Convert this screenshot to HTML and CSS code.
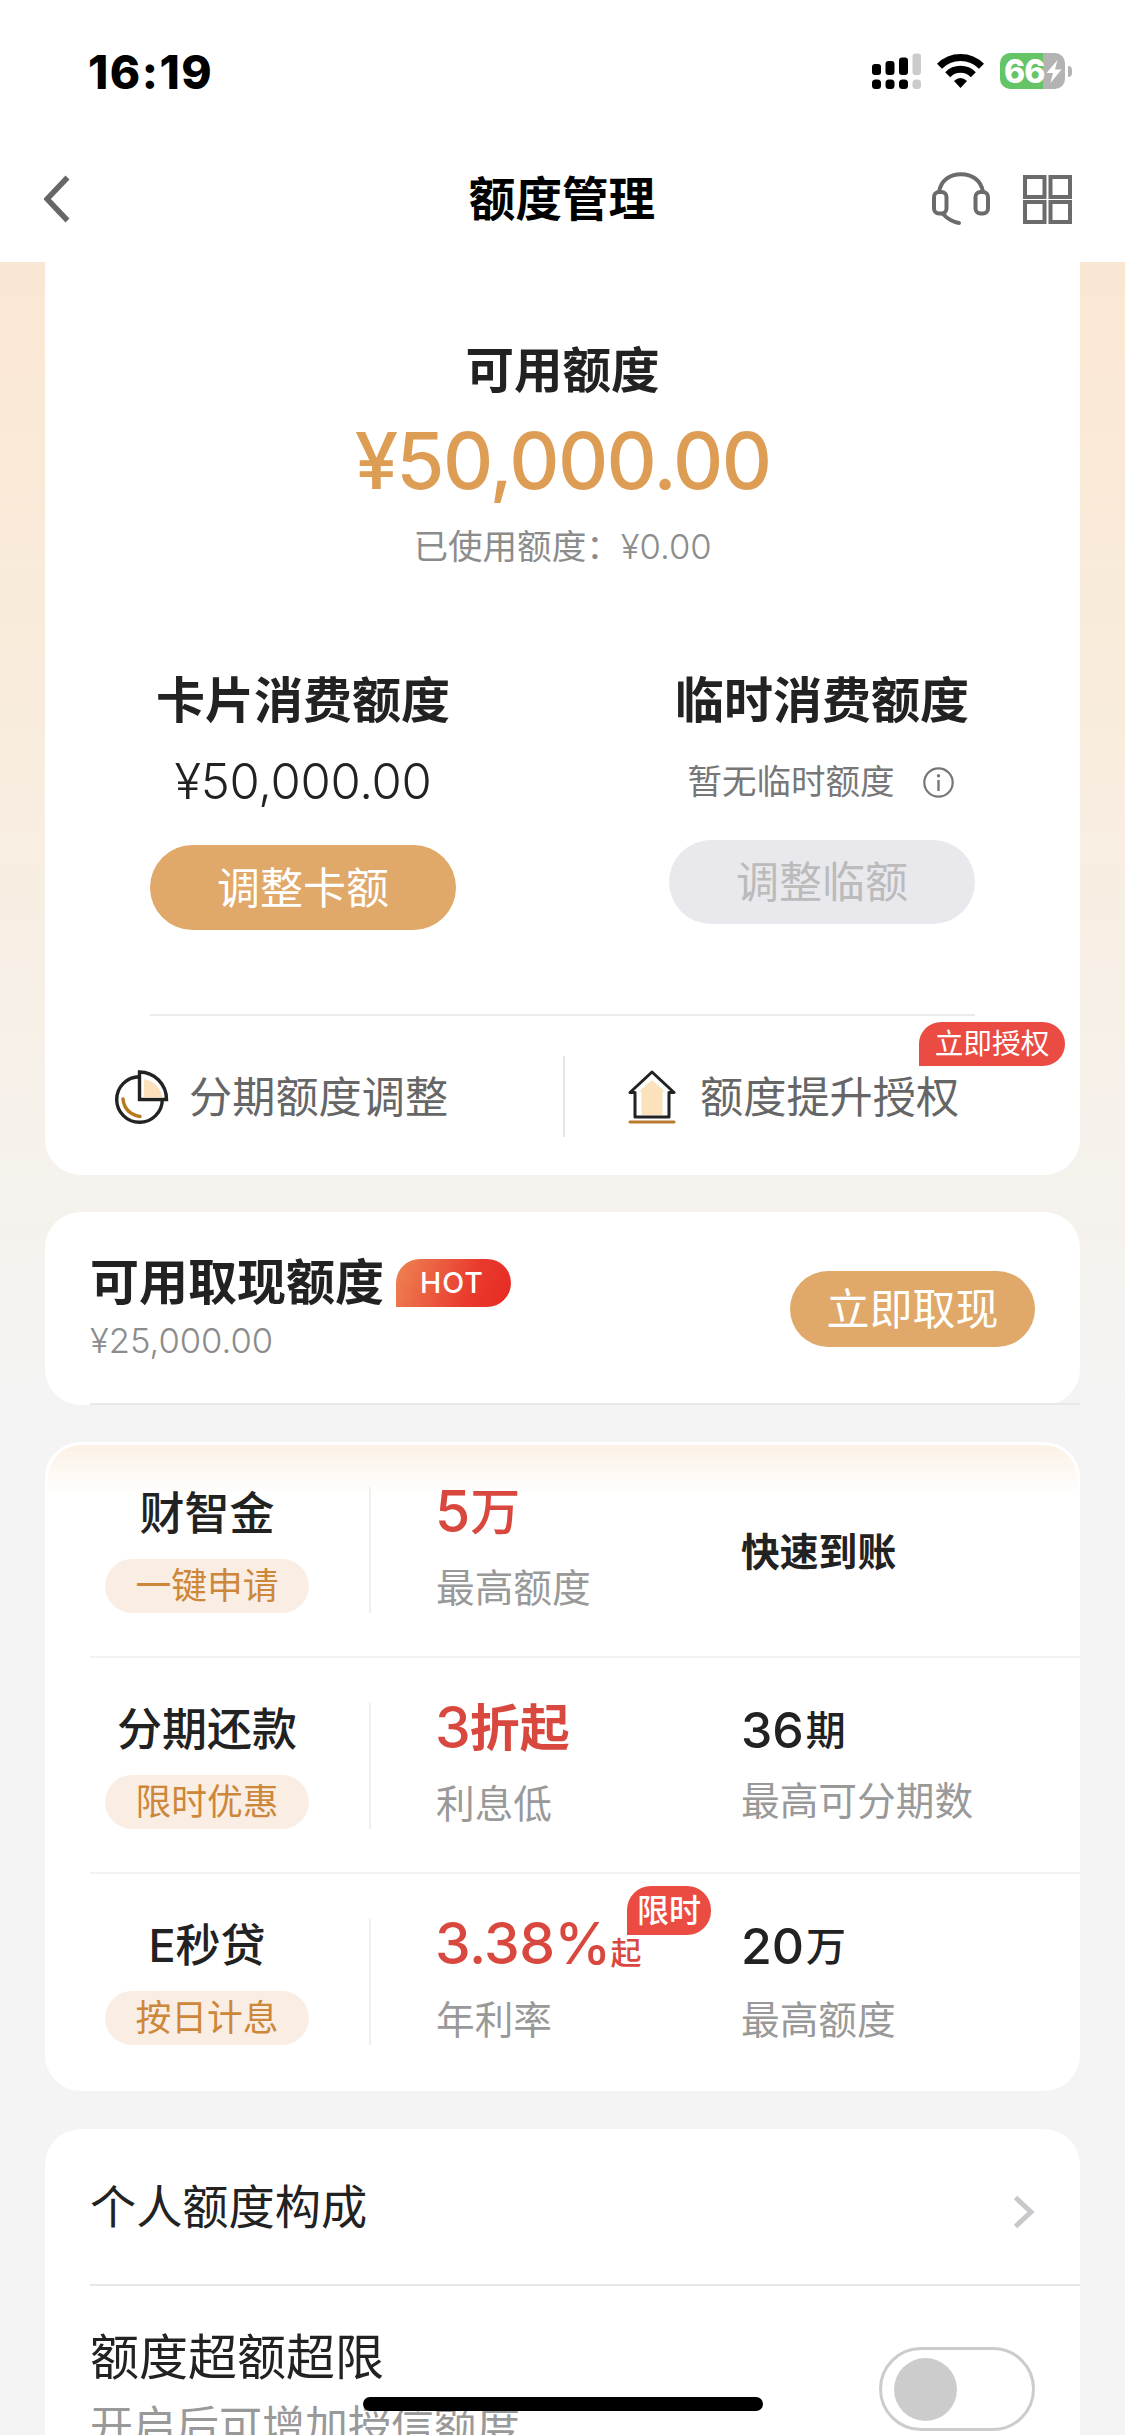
FILE: index.html
```html
<!DOCTYPE html>
<html lang="zh-CN">
<head>
<meta charset="utf-8">
<meta name="viewport" content="width=device-width, initial-scale=1">
<title>额度管理</title>
<link rel="stylesheet" href="styles.css">
</head>
<body>
<header class="header">
  <div class="status-bar">
    <span class="clock">16:19</span>
    <div class="status-icons">
      <svg class="signal" width="49" height="36" viewBox="0 0 49 36">
        <g fill="#000">
          <rect x="0" y="11" width="9" height="11" rx="3"/><rect x="13.5" y="8" width="9" height="14" rx="3"/><rect x="27" y="4.500" width="9" height="17.500" rx="3"/>
          <rect x="0" y="26.500" width="9" height="9.500" rx="3.500"/><rect x="13.500" y="26.500" width="9" height="9.500" rx="3.500"/><rect x="27" y="26.500" width="9" height="9.500" rx="3.500"/>
        </g>
        <g fill="#cbcbcb"><rect x="40.500" y="0.500" width="8.500" height="21.500" rx="3"/><rect x="40.500" y="26.500" width="8.500" height="9.500" rx="3.500"/></g>
      </svg>
      <svg class="wifi" width="47" height="36" viewBox="0 0 47 36">
        <g fill="none" stroke="#000" stroke-width="7">
          <path d="M2.500 13.200 A29.500 29.500 0 0 1 44.500 13.200"/>
          <path d="M10.700 21.700 A18 18 0 0 1 36.300 21.700"/>
        </g>
        <path d="M17 28 Q23.500 22 30 28 L23.500 35 Z" fill="#000"/>
      </svg>
      <div class="battery">
        <div class="battery-body">
          <span class="battery-level">66</span>
          <svg width="16" height="23" viewBox="0 0 16 23"><path d="M11.500 0 L0.500 13 H7 L4.500 23 L15.500 9.500 H9 Z" fill="#fff"/></svg>
        </div>
        <div class="battery-cap"></div>
      </div>
    </div>
  </div>
  <nav class="nav">
    <svg class="back" width="26" height="48" viewBox="0 0 26 48"><path d="M23.500 2.500 L3 24 L23.500 45.500" fill="none" stroke="#666" stroke-width="5.500"/></svg>
    <h1 class="nav-title">额度管理</h1>
    <div class="nav-actions">
      <svg width="58" height="54" viewBox="0 0 58 54" fill="none" stroke="#6b6b6b" stroke-width="4">
        <rect x="2" y="20" width="12.500" height="21.500" rx="5"/><rect x="43.500" y="20" width="12.500" height="21.500" rx="5"/>
        <path d="M7 20 C9 8 18 2.300 29 2.300 S49 8 51 20"/><path d="M11 42 Q18 49.500 27 51" stroke-linecap="round"/>
      </svg>
      <svg width="49" height="49" viewBox="0 0 49 49" fill="none" stroke="#6b6b6b" stroke-width="4">
        <rect x="2" y="2" width="19.500" height="20"/><rect x="27.500" y="2" width="19.500" height="20"/>
        <rect x="2" y="27" width="19.500" height="20"/><rect x="27.500" y="27" width="19.500" height="20"/>
      </svg>
    </div>
  </nav>
</header>

<main class="page">
  <section class="card quota">
    <h2 class="quota-title">可用额度</h2>
    <p class="quota-total">¥50,000.00</p>
    <p class="quota-used">已使用额度：<span class="quota-used-num">¥0.00</span></p>
    <div class="quota-split">
      <div class="quota-col">
        <h3 class="quota-name">卡片消费额度</h3>
        <p class="quota-value">¥50,000.00</p>
        <button class="btn btn-card">调整卡额</button>
      </div>
      <div class="quota-col">
        <h3 class="quota-name">临时消费额度</h3>
        <p class="quota-none">暂无临时额度
          <svg width="31" height="31" viewBox="0 0 31 31"><circle cx="15.500" cy="15.500" r="14.200" fill="none" stroke="#777" stroke-width="2.200"/><circle cx="15.500" cy="8.800" r="1.700" fill="#777"/><path d="M15.500 13 V24" stroke="#777" stroke-width="2.400"/></svg>
        </p>
        <button class="btn btn-disabled" disabled>调整临额</button>
      </div>
    </div>
    <div class="quota-links">
      <a class="link link-split">
        <svg width="54" height="54" viewBox="0 0 54 54" fill="none" stroke="#222" stroke-width="3.400">
          <circle cx="24.500" cy="29.500" r="22.800"/>
          <path d="M24.500 2 A27 27.500 0 0 1 51.500 29.500 H24.500 Z" fill="#fff"/>
          <path d="M29 9 Q44 12 47.500 27.500 H29 Z" fill="#fbe2bd" stroke="none"/>
          <path d="M8 29 Q9.500 43.500 25 46.500" stroke="#b87a20" stroke-linecap="round"/>
        </svg>
        <span>分期额度调整</span>
      </a>
      <i class="link-divider"></i>
      <a class="link link-auth">
        <svg width="48" height="54" viewBox="0 0 48 54" fill="none" stroke="#222" stroke-width="3">
          <path d="M24 2 L46 22.500 H41 V47 H7 V22.500 H2 Z" stroke-linejoin="round"/>
          <path d="M24 10 L37 21.500 H34.500 V45 H13.500 V21.500 H11 Z" fill="#fbe2bd" stroke="none"/>
          <path d="M2 52 H46" stroke="#b87a2c" stroke-linecap="round"/>
        </svg>
        <span>额度提升授权</span>
      </a>
      <span class="badge badge-auth">立即授权</span>
    </div>
  </section>

  <section class="card cash">
    <div class="cash-info">
      <h2 class="cash-title">可用取现额度<span class="badge-hot">HOT</span></h2>
      <p class="cash-value">¥25,000.00</p>
    </div>
    <button class="btn btn-cash">立即取现</button>
  </section>

  <section class="card products">
    <div class="product product-first">
      <div class="product-head"><h3>财智金</h3><span class="pill">一键申请</span></div>
      <div class="product-rate"><p class="rate">5<span class="rate-cn">万</span></p><p class="note">最高额度</p></div>
      <div class="product-more product-more-single"><p class="fact-text">快速到账</p></div>
    </div>
    <div class="product">
      <div class="product-head"><h3>分期还款</h3><span class="pill">限时优惠</span></div>
      <div class="product-rate"><p class="rate">3<span class="rate-cn rate-strong">折起</span></p><p class="note">利息低</p></div>
      <div class="product-more"><p class="fact">36<span class="fact-unit">期</span></p><p class="note note-up">最高可分期数</p></div>
    </div>
    <div class="product">
      <div class="product-head"><h3>E秒贷</h3><span class="pill">按日计息</span></div>
      <div class="product-rate"><p class="rate rate-long">3.38%<span class="rate-from">起</span></p><p class="note">年利率</p><span class="badge badge-limited">限时</span></div>
      <div class="product-more"><p class="fact">20<span class="fact-unit">万</span></p><p class="note">最高额度</p></div>
    </div>
  </section>

  <section class="card settings">
    <a class="setting">
      <span class="setting-name">个人额度构成</span>
      <svg width="22" height="34" viewBox="0 0 22 34"><path d="M2.500 2.500 L18 17 L2.500 31.500" fill="none" stroke="#c7c7cc" stroke-width="5"/></svg>
    </a>
    <div class="setting setting-over">
      <div>
        <p class="over-title">额度超额超限</p>
        <p class="over-desc">开启后可增加授信额度</p>
      </div>
      <span class="toggle"><i class="knob"></i></span>
    </div>
  </section>
</main>
<div class="home-indicator"></div>
</body>
</html>
```
FILE: styles.css
```css
* { box-sizing: border-box; }

body {
  margin: 0;
  width: 1125px;
  height: 2435px;
  overflow: hidden;
  position: relative;
  background: #f4f4f4;
  color: #222;
  font-family: Inter, "Noto Sans CJK SC", sans-serif;
}

h1, h2, h3, p { margin: 0; font-weight: 500; white-space: nowrap; }
svg { display: block; flex: none; }

/* header */
.header { height: 262px; background: #fff; }
.status-bar {
  height: 142px;
  padding: 0 53px 0 88px;
  display: flex;
  justify-content: space-between;
  align-items: center;
}
.clock { font-size: 46px; font-weight: 800; line-height: 62px; letter-spacing: 1.500px; padding-top: 2px; color: #000; }
.status-icons { display: flex; align-items: center; }
.wifi { margin-left: 16px; }
.battery { margin-left: 16px; display: flex; align-items: center; gap: 3px; }
.battery-body {
  width: 65px;
  height: 36px;
  border-radius: 10px;
  padding-left: 4px;
  display: flex;
  align-items: center;
  background: linear-gradient(90deg, #65c466 43px, #b3b3b3 43px);
}
.battery-level { width: 42px; font-size: 32px; font-weight: 850; line-height: 36px; letter-spacing: -1px; padding-top: 1px; color: #fff; }
.battery-cap { width: 4px; height: 11px; border-radius: 0 5px 5px 0; background: #b3b3b3; }

.nav {
  height: 114px;
  padding: 0 53px 0 44px;
  display: grid;
  grid-template-columns: 1fr auto 1fr;
  align-items: center;
}
.nav-title { font-size: 46.600px; font-weight: 700; line-height: 60px; color: #000; margin-left: 8px; }
.nav-actions { justify-self: end; display: flex; align-items: center; gap: 33px; }

/* page */
.page {
  height: 2173px;
  padding: 0 45px;
  display: flex;
  flex-direction: column;
  background: linear-gradient(180deg, #fae7d3 0, #f9ecdc 420px, #f6f1ea 850px, #f4f4f4 1150px);
}
.card { flex: none; position: relative; background: #fff; border-radius: 36px; }

.btn {
  display: block;
  border: 0;
  padding: 0 0 6px;
  border-radius: 43px;
  background: #e0a869;
  color: #fff;
  font-family: inherit;
  font-size: 43px;
  font-weight: 400;
}
.badge {
  position: absolute;
  border-radius: 24px 24px 24px 0;
  background: #ea4c43;
  color: #fff;
  text-align: center;
}

/* total quota */
.quota { height: 913px; padding-top: 79px; border-radius: 0 0 36px 36px; }
.quota-title { font-size: 48.500px; font-weight: 700; line-height: 60px; text-align: center; }
.quota-total { margin-top: 20px; font-size: 78px; line-height: 80px; letter-spacing: -1.700px; text-align: center; color: #de9d54; }
.quota-used { margin-top: 25px; font-size: 34.600px; font-weight: 400; line-height: 40px; text-align: center; color: #8c8c8c; }
.quota-used-num { font-weight: 350; }
.quota-split {
  height: 450px;
  margin: 0 105px;
  padding-top: 105px;
  display: grid;
  grid-template-columns: 306px 306px;
  justify-content: space-between;
  border-bottom: 2px solid #ebebeb;
}
.quota-col { display: flex; flex-direction: column; align-items: center; }
.quota-name { font-size: 49px; font-weight: 700; line-height: 60px; }
.quota-value { margin-top: 21px; font-size: 49px; font-weight: 350; letter-spacing: -0.300px; line-height: 60px; }
.quota-none {
  margin-top: 31px;
  margin-left: -3px;
  display: flex;
  align-items: center;
  gap: 28px;
  font-size: 34.500px;
  font-weight: 400;
  line-height: 40px;
  color: #777;
}
.btn-card { margin-top: 33px; width: 306px; height: 85px; }
.btn-disabled { margin-top: 38px; width: 306px; height: 84px; background: #e8e8ed; color: #bbb; }

.quota-links { position: relative; height: 161px; display: flex; align-items: center; }
.link { display: flex; align-items: center; font-size: 43.200px; font-weight: 400; line-height: 60px; color: #666; }
.link-split { width: 518px; padding-left: 70px; gap: 20px; }
.link-auth { padding-left: 63px; gap: 24px; }
.link-divider { width: 2px; height: 81px; background: #e5e5e5; }
.badge-auth { left: 874px; top: 6px; width: 146px; height: 44px; font-size: 28.700px; line-height: 44px; }

/* cash quota */
.cash {
  height: 193px;
  margin-top: 37px;
  padding: 0 45px;
  display: flex;
  align-items: center;
  justify-content: space-between;
}
.cash::after { content: ""; position: absolute; left: 45px; right: 0; bottom: 0; height: 2px; background: #e8e8e8; }
.cash-title { display: flex; align-items: center; gap: 12px; font-size: 49px; font-weight: 700; line-height: 60px; }
.badge-hot {
  width: 115px;
  height: 48px;
  margin-top: -1px;
  border-radius: 24px 24px 24px 0;
  background: linear-gradient(110deg, #ee8453, #e93a2e 65%, #e62a22);
  color: #fff;
  font-size: 28.500px;
  font-weight: 550;
  line-height: 48px;
  padding-right: 3px;
  letter-spacing: 1px;
  text-align: center;
}
.cash-value { margin-top: 7px; font-size: 34.600px; font-weight: 350; line-height: 40px; color: #8c8c8c; }
.cash-info { margin-top: -4px; }
.btn-cash { width: 245px; height: 76px; }

/* products */
.products { height: 649px; margin-top: 37px; overflow: hidden; }
.product {
  position: relative;
  height: 216px;
  padding: 45px 0 45px 60px;
  display: flex;
}
.product + .product::before { content: ""; position: absolute; left: 45px; right: 0; top: -2px; height: 2px; background: #f2f2f2; }
.product-first {
  border: 3px solid #fff;
  border-bottom: 0;
  border-radius: 36px 36px 0 0;
  padding: 42px 0 45px 57px;
  background: linear-gradient(180deg, #fbf1e5 0, #fff 50px);
}
.product-head { width: 204px; display: flex; flex-direction: column; align-items: center; }
.product-head h3 { font-size: 45px; line-height: 54px; }
.pill {
  margin-top: 18px;
  width: 204px;
  height: 54px;
  border-radius: 27px;
  background: #faeee4;
  color: #cd873a;
  font-size: 35.800px;
  line-height: 54px;
  text-align: center;
}
.product-rate { position: relative; width: 372px; margin-left: 60px; padding-left: 65px; border-left: 2px solid #f0f0f0; height: 126px; }
.rate { height: 60px; font-size: 57px; line-height: 60px; margin-top: -5px; margin-left: -1px; color: #d8483f; }
.rate-cn { font-size: 50px; vertical-align: 2px; line-height: 1; }
.rate-strong { font-weight: 700; margin-left: -1px; }
.rate-from { font-size: 31px; line-height: 1; }
.note { margin-top: 26px; font-size: 38.700px; font-weight: 400; line-height: 40px; color: #999; }
.fact { height: 60px; font-size: 50px; line-height: 60px; margin-top: -3px; }
.fact + .note { margin-top: 24px; }
.fact + .note-up { margin-top: 21px; }
.fact-unit { font-size: 40px; line-height: 1; margin-left: 2px; vertical-align: 3px; }
.product-more-single { padding-top: 44px; }
.fact-text { font-size: 38.800px; line-height: 42px; }
.product-more-single .fact-text { font-weight: 700; }
.rate-long { letter-spacing: -0.600px; }
.badge-limited { left: 256px; top: -33px; width: 84px; height: 49px; font-size: 32px; font-weight: 500; line-height: 50px; }

/* settings */
.settings { height: 400px; margin-top: 38px; }
.setting { height: 157px; margin-left: 45px; padding-right: 45px; display: flex; align-items: center; justify-content: space-between; border-bottom: 2px solid #e8e8e8; }
.setting svg { margin-top: 10px; }
.setting-name { font-size: 46.200px; font-weight: 400; line-height: 62px; }
.setting-over { height: 240px; padding-top: 42px; align-items: flex-start; border-bottom: 0; }
.over-title { font-size: 49px; font-weight: 400; line-height: 60px; }
.over-desc { margin-top: 18px; font-size: 43px; font-weight: 400; line-height: 40px; color: #999; }
.toggle { width: 156px; height: 84px; margin-top: 19px; border: 3px solid #ccc; border-radius: 42px; padding: 8px 12px; }
.knob { display: block; width: 63px; height: 63px; border-radius: 50%; background: #ccc; }

.home-indicator { position: absolute; left: 363px; top: 2397px; width: 400px; height: 14px; border-radius: 7px; background: #000; }
```
